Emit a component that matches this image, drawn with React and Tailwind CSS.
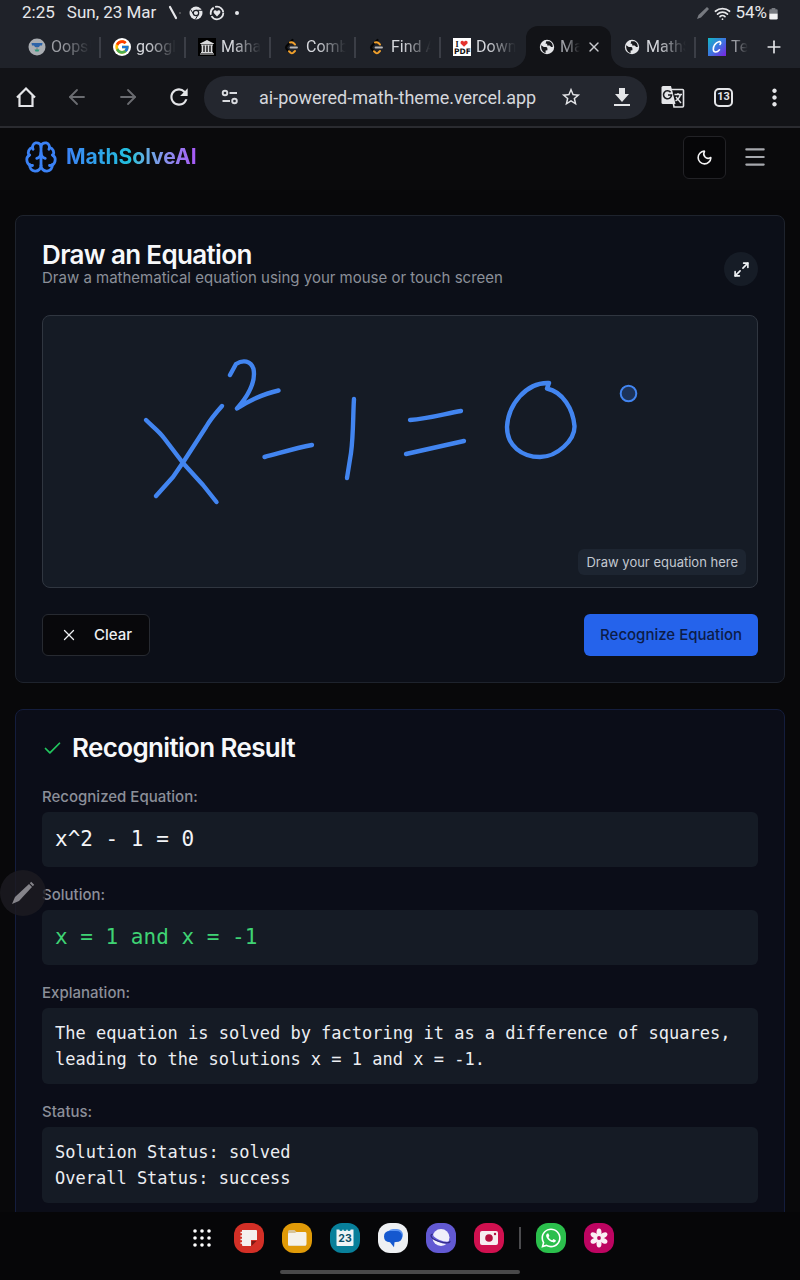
import React from "react";
import { Brain, Moon, Menu, Maximize2, X, Check, Plus, Wifi, ArrowLeft, ArrowRight } from "lucide-react";
import { FcGoogle } from "react-icons/fc";
import { MdRefresh, MdStarBorder, MdMoreVert } from "react-icons/md";
import { FaWhatsapp } from "react-icons/fa";

const fade = "[mask-image:linear-gradient(to_right,black_30%,transparent)]";

function GlobeIcon() {
  return (
    <svg viewBox="0 0 18 18" className="size-[18px] shrink-0" aria-hidden="true">
      <circle cx="9" cy="9" r="7.2" fill="#e4e5e8" />
      <path d="M3.200 7.200 5.800 9h2.400q1.200.2 1.200 1.600v1.600l-1.800.2v2.600C5 14.400 2.800 11.500 3.200 7.200z" fill="#17181c" />
      <path d="M8.200 3.200h3.200c2.400 1 3.400 3 3.400 5.800h-1.600l-1.600-1.600H9.200V5.800H7.600z" fill="#17181c" />
    </svg>
  );
}

function LampIcon() {
  return (
    <svg viewBox="0 0 18 18" className="size-[18px] shrink-0" aria-hidden="true">
      <circle cx="9" cy="9" r="8.500" fill="#a9adb2" />
      <path d="M3.500 5h11l-.5 2.500H12q-.5 2-3 2t-3-2H4z" fill="#2c63a8" />
      <path d="M8 9h2v3H8z" fill="#8b9297" />
      <path d="M6.500 11.500h5l-1 2h-3z" fill="#2f9a7c" />
    </svg>
  );
}

function MuseumIcon() {
  return (
    <svg viewBox="0 0 18 18" className="size-[18px] shrink-0" aria-hidden="true">
      <path fill="#000" d="M0 0h18v18H0z" />
      <path d="M2 5.500 9 2l7 3.500V6H2zM3 14h12v1H3zM2 15.500h14v1H2zM3 6.500h12v1H3z" fill="#d9dadc" />
      <path d="M4.500 7v7M7.500 7v7M10.500 7v7M13.500 7v7" stroke="#d9dadc" strokeWidth="1.700" />
    </svg>
  );
}

function CodeIcon() {
  return (
    <svg viewBox="0 0 18 18" className="size-[18px] shrink-0" fill="none" strokeLinecap="round" aria-hidden="true">
      <path d="M9.500 2 3.500 8.300q-1 1.200 0 2.400L6 13.300" stroke="#050505" strokeWidth="2.200" />
      <path d="M7 4.500q2-.8 3.500.6l1.500 1.400" stroke="#f0a02c" strokeWidth="2" />
      <path d="m6 13.300 1.600 1.500q1.300 1 2.600 0l1.800-1.800" stroke="#f0a02c" strokeWidth="2" />
      <path d="M7.500 9.500H14" stroke="#b7b7b9" strokeWidth="1.800" />
    </svg>
  );
}

function PdfIcon() {
  return (
    <svg viewBox="0 0 18 18" className="size-[18px] shrink-0" aria-hidden="true">
      <path fill="#fff" d="M0 0h18v18H0z" />
      <text x="2.500" y="8.500" fontSize="8" fontWeight="700" fontFamily="Liberation Serif, serif" fill="#111">I</text>
      <path d="M11 8.800 7.600 5.400q-.4-2.600 1.600-2.600 1.300 0 1.800 1.200.5-1.200 1.900-1.200 2.200.2 1.600 2.600z" fill="#e5322d" />
      <text x="1" y="16" fontSize="7.500" fontWeight="700" fontFamily="DejaVu Sans, sans-serif" fill="#111">PDF</text>
    </svg>
  );
}

function ScriptIcon() {
  return (
    <svg viewBox="0 0 18 18" className="size-[18px] shrink-0" aria-hidden="true">
      <defs>
        <linearGradient id="teal-violet" x1="0" y1="0" x2="1" y2="1">
          <stop offset="0" stopColor="#12b9c4" />
          <stop offset="0.500" stopColor="#3c76df" />
          <stop offset="1" stopColor="#7b22e0" />
        </linearGradient>
      </defs>
      <path fill="url(#teal-violet)" d="M0 0h18v18H0z" />
      <path d="M12 6.500c1.500-1.500.5-3.300-1.300-2.800C7.500 4.500 5 8.500 5.300 11.500c.3 3.300 3.700 3.400 6.200.3" fill="none" stroke="#fff" strokeWidth="1.600" strokeLinecap="round" />
    </svg>
  );
}

function GoogleBadge() {
  return (
    <span className="flex size-[18px] shrink-0 items-center justify-center rounded-full bg-white">
      <FcGoogle size={16} />
    </span>
  );
}

const tabs = [
  { title: "Oops!", icon: <LampIcon />, line: true, dim: true },
  { title: "google", icon: <GoogleBadge />, line: true },
  { title: "Mahara", icon: <MuseumIcon />, line: true },
  { title: "Combi", icon: <CodeIcon />, line: true },
  { title: "Find A", icon: <CodeIcon />, line: true },
  { title: "Downl", icon: <PdfIcon />, shape: "rounded-br-2xl" },
  { title: "Math", icon: <GlobeIcon />, active: true },
  { title: "MathS", icon: <GlobeIcon />, line: true, shape: "rounded-bl-2xl" },
  { title: "Te", icon: <ScriptIcon />, last: true, dim: true },
];

function Tab({ tab }) {
  if (tab.active) {
    return (
      <div className="w-[85px] shrink-0 bg-[#1f2229]">
        <div className="flex h-full items-center rounded-t-xl bg-[#121317] pl-3">
          <button className="flex min-w-0 items-center gap-1">
            {tab.icon}
            <span className={`w-[20px] overflow-hidden text-left text-[16px] text-[#a0a2a8] ${fade}`}>{tab.title}</span>
          </button>
          <button aria-label="Close tab" className="ml-[6px] text-[#c9cbd0]">
            <X size={16} strokeWidth={2} />
          </button>
        </div>
      </div>
    );
  }
  return (
    <div className={`bg-[#121317] ${tab.last ? "min-w-0 flex-1" : "w-[85px] shrink-0"}`}>
      <button className={`flex h-full w-full items-center gap-1 bg-[#1f2229] pl-3 ${tab.shape || ""}`}>
        {tab.icon}
        <span className={`min-w-0 flex-1 overflow-hidden whitespace-nowrap pl-px text-left text-[16px] ${tab.dim ? "text-[#9b9da3]" : "text-[#d5d7dc]"} ${fade}`}>
          {tab.title}
        </span>
        {!tab.last && <span className={`ml-1 h-[21px] w-[2px] shrink-0 ${tab.line ? "bg-[#3b3e46]" : ""}`} />}
      </button>
    </div>
  );
}

function StatusBar() {
  return (
    <div className="flex h-[26px] shrink-0 items-center justify-between bg-[#1f2229] pr-[22px] pl-[22px] text-[17px] text-[#e6e7ea]">
      <div className="flex items-center gap-3">
        <time>2:25</time>
        <span>Sun, 23 Mar</span>
        <svg viewBox="0 0 72 16" className="h-4 w-[72px]" fill="none" aria-hidden="true">
          <path d="m2 2 6 11" stroke="#e6e7ea" strokeWidth="2.200" strokeLinecap="round" />
          <circle cx="12" cy="8" r=".8" fill="#888" />
          <circle cx="28" cy="8" r="6.500" fill="#e6e7ea" />
          <circle cx="28" cy="8" r="2.700" fill="#e6e7ea" stroke="#1f2229" strokeWidth="1.200" />
          <path d="M28 5.300h6M25.700 9.500l-3-5M30.300 9.500l-3 5" stroke="#1f2229" />
          <circle cx="49" cy="8" r="6.300" stroke="#e6e7ea" strokeWidth="1.800" strokeDasharray="16 1.500 8 1.500 11 1.500" />
          <path d="M49 11.500 45.800 8q-.8-2.500 1.300-2.700 1.400 0 1.900 1.200.5-1.200 1.900-1.200 2.100.2 1.300 2.700z" fill="#e6e7ea" />
          <circle cx="69" cy="8" r="2" fill="#e6e7ea" />
        </svg>
      </div>
      <div className="flex items-center gap-1">
        <svg viewBox="0 0 14 14" className="size-[14px]" aria-hidden="true">
          <path d="m1 13 1.500-4L11 1l2 2-8 8.500z" fill="#777a80" />
        </svg>
        <Wifi size={17} strokeWidth={2.400} />
        <span className="flex items-center gap-0.5">
          54%
          <svg viewBox="0 0 9 14" className="h-[13px] w-[9px]" aria-hidden="true">
            <path d="M2.500 1h4v1.500H8q1 0 1 1V7H0V3.500q0-1 1-1h1.500z" fill="#777a80" />
            <path d="M0 7h9v5q0 1.500-1.500 1.500h-6Q0 13.500 0 12z" fill="#f2f2f3" />
          </svg>
        </span>
      </div>
    </div>
  );
}

function ToolButton({ label, dim, children }) {
  return (
    <button aria-label={label} className={`flex w-[51px] shrink-0 items-center justify-center ${dim ? "text-[#6a6c71]" : "text-[#e4e5e8]"}`}>
      {children}
    </button>
  );
}

function Toolbar() {
  return (
    <div className="flex h-[60px] shrink-0 items-center border-b-2 border-[#2a2b30] bg-[#121317]">
      <ToolButton label="Home">
        <svg viewBox="0 0 22 22" className="size-[22px]" fill="none" stroke="currentColor" strokeWidth="2.200" aria-hidden="true">
          <path d="M2 11.500 11 2.500l9 9M4.500 9v11h13V9" />
        </svg>
      </ToolButton>
      <ToolButton label="Back" dim><ArrowLeft size={24} strokeWidth={1.800} /></ToolButton>
      <ToolButton label="Forward" dim><ArrowRight size={24} strokeWidth={1.800} /></ToolButton>
      <ToolButton label="Reload"><MdRefresh size={26} /></ToolButton>
      <div className="flex h-[43px] min-w-0 flex-1 items-center rounded-full bg-[#24272f]">
        <button aria-label="Site settings" className="flex w-[51px] shrink-0 items-center justify-center">
          <svg viewBox="0 0 18 16" className="h-4 w-[18px]" fill="none" stroke="#d9dbdf" strokeWidth="1.900" aria-hidden="true">
            <circle cx="4" cy="4" r="2.300" />
            <path d="M8.500 4H16M1.500 12H9" />
            <circle cx="13.500" cy="12" r="2.300" />
          </svg>
        </button>
        <input aria-label="Address" readOnly value="ai-powered-math-theme.vercel.app" className="ml-1 min-w-0 flex-1 bg-transparent text-[18px] text-[#d5d7dc] outline-none" />
        <button aria-label="Bookmark" className="flex w-[51px] shrink-0 items-center justify-center text-[#e4e5e8]"><MdStarBorder size={22} /></button>
        <button aria-label="Download" className="flex w-[51px] shrink-0 items-center justify-center">
          <svg viewBox="0 0 16 20" className="h-5 w-4" fill="#e4e5e8" aria-hidden="true">
            <path d="M5 1h6v6h4l-7 8-7-8h4zM0 17h16v2H0z" />
          </svg>
        </button>
      </div>
      <ToolButton label="Translate">
        <svg viewBox="0 0 24 24" className="size-6" aria-hidden="true">
          <path d="M10 4.500h11.500q1 0 1 1V21q0 1-1 1H13z" fill="none" stroke="#e4e5e8" strokeWidth="1.600" />
          <path d="M2 1h8l4.500 18H2q-1.500 0-1.500-1.500v-15Q.5 1 2 1z" fill="#e4e5e8" />
          <path d="M9.600 7.200A4 4 0 1 0 10.500 10H7" fill="none" stroke="#1a1b1f" strokeWidth="1.600" />
          <path d="M13.500 9.500H21M17 8v1.500M19.500 9.500q-1 4-5 6.500M15 12l5 6" fill="none" stroke="#e4e5e8" strokeWidth="1.400" />
        </svg>
      </ToolButton>
      <ToolButton label="Open tabs">
        <span className="flex size-[19px] items-center justify-center rounded-[5px] border-2 border-[#e4e5e8] text-[11px] leading-4 font-bold">13</span>
      </ToolButton>
      <ToolButton label="More options"><MdMoreVert size={27} /></ToolButton>
    </div>
  );
}

function Field({ label, children, className }) {
  return (
    <div className="mt-[18px]">
      <dt className="text-[15px] leading-5 font-medium text-[#8b8f99]">{label}</dt>
      <dd className={`mt-[5px] rounded-md bg-[#151b25] px-[13px] py-3 font-['DejaVu_Sans_Mono',monospace] ${className}`}>{children}</dd>
    </div>
  );
}

function DrawCard() {
  return (
    <section className="rounded-lg border border-[#1e232d] bg-[#0c0f18] p-[26px]">
      <div className="flex items-center justify-between">
        <div>
          <h2 className="text-[26px] leading-[26px] font-semibold tracking-tight text-[#f7f8fa]">Draw an Equation</h2>
          <p className="text-[15px] leading-5 text-[#8b8f99]">Draw a mathematical equation using your mouse or touch screen</p>
        </div>
        <button aria-label="Expand canvas" className="mt-2 flex size-[34px] items-center justify-center rounded-full bg-[#161c26] text-[#f0f2f5]">
          <Maximize2 size={17} strokeWidth={2.300} />
        </button>
      </div>
      <div className="relative mt-[27px] overflow-hidden rounded-lg border border-[#303640] bg-[#151b25]">
        <svg viewBox="43 316 714 271" className="block w-full" fill="none" stroke="#4285f0" strokeWidth="4.400" strokeLinecap="round" strokeLinejoin="round" role="img" aria-label="Handwritten equation">
          <path d="M146 420C153 427 159 431 164 438L183 463 203 485 216.500 502" />
          <path d="M222 406C213 416 210 420 206 427L184 461 173 477 156 496" />
          <path d="M230 375 236 364C243 359.500 251 360.500 253.500 369 256 382 248 396 237 408.500 245 403 262 394 278.500 390.500" />
          <path d="M264.500 457C280 453 296 448 312 445" />
          <path d="M354 399C353 412 353.500 435 351 453L347 478" />
          <path d="M410 420C428 419 444 414 461 411" />
          <path d="M406 454 464 441" />
          <path d="M549 383C526 382 508 405 507 427 507 446 522 457 540 457 557 457 575 440 574.500 426 573 409 563 392 547 388.500L549 383" />
          <circle cx="628.500" cy="393.500" r="7.800" fill="#1d3358" strokeWidth="2" />
        </svg>
        <span className="absolute right-[11px] bottom-3 rounded-md bg-[#1d2531] px-2 py-[3px] text-[13px] leading-5 text-[#c3c8d0]">Draw your equation here</span>
      </div>
      <div className="mt-[26px] flex items-center justify-between">
        <button className="flex h-[42px] items-center gap-4 rounded-md border border-[#272a31] bg-[#08080b] px-[17px] text-[15px] font-medium text-[#eef0f3]">
          <X size={18} strokeWidth={1.700} />
          Clear
        </button>
        <button className="h-[42px] rounded-md bg-[#2563eb] px-4 text-[15px] font-medium text-[#0c1c48]">Recognize Equation</button>
      </div>
    </section>
  );
}

function ResultCard() {
  return (
    <section className="mt-[26px] rounded-lg border border-[#141d3d] bg-[#0b0d18] px-[26px] pt-[25px] pb-[26px]">
      <h2 className="flex items-center gap-[9px] text-[26px] leading-[26px] font-semibold tracking-tight text-[#f7f8fa]">
        <Check size={21} strokeWidth={2} className="text-[#22c55e]" />
        Recognition Result
      </h2>
      <dl className="pt-2">
        <Field label="Recognized Equation:" className="text-[21px] leading-[31px] text-[#f2f4f7]">x^2 - 1 = 0</Field>
        <Field label="Solution:" className="text-[21px] leading-[31px] text-[#3fd374]">x = 1 and x = -1</Field>
        <Field label="Explanation:" className="text-[17px] leading-[26px] text-[#eceef2]">
          The equation is solved by factoring it as a difference of squares, leading to the solutions x = 1 and x = -1.
        </Field>
        <Field label="Status:" className="text-[17px] leading-[26px] text-[#eceef2]">
          Solution Status: solved
          <br />
          Overall Status: success
        </Field>
      </dl>
    </section>
  );
}

function DockApp({ label, color, children }) {
  return (
    <button aria-label={label} className={`flex size-[30px] items-center justify-center rounded-[12px] ${color}`}>
      <svg viewBox="0 0 30 30" className="size-[30px]" aria-hidden="true">{children}</svg>
    </button>
  );
}

function Dock() {
  return (
    <footer className="relative z-10 flex h-[68px] shrink-0 flex-col items-center justify-between bg-[#060608] pt-[11px] pb-[6px]">
      <nav aria-label="Dock" className="flex items-center gap-[18px]">
        <DockApp label="All apps" color="">
          <g fill="#fff">
            {[8, 15, 22].map((y) => [9, 16, 23].map((x) => <circle key={`${x}-${y}`} cx={x} cy={y} r="1.800" />))}
          </g>
        </DockApp>
        <DockApp label="Notes" color="bg-[#d32f26]">
          <path d="M8 7h14q1 0 1 1v9h-6v6H9q-1 0-1-1z" fill="#f4efef" />
          <path d="M17.500 23v-5h5z" fill="#7d1a15" />
          <path d="M6.500 9.500h3M6.500 13h3M6.500 16.500h3M6.500 20h3" stroke="#f4efef" strokeWidth="1.500" />
        </DockApp>
        <DockApp label="My files" color="bg-[#e09a08]">
          <path d="M6 9q0-2 1.500-2h5l2 2H23q1 0 1 1v12q0 1-1 1H7q-1 0-1-1z" fill="#d7c49a" />
          <path d="M6 11q0-1 1-1h6l1.500-1H23q1.500 0 1.500 1.500V21q0 1.500-1.500 1.500H7.500Q6 22.500 6 21z" fill="#f4f1ea" />
        </DockApp>
        <DockApp label="Calendar" color="bg-[#087f9a]">
          <path d="M6.500 6.500h17V22q0 1-1 1h-15q-1 0-1-1z" fill="#eef3f5" />
          <g fill="#087f9a"><circle cx="11" cy="6.500" r="1.600" /><circle cx="15" cy="6.500" r="1.600" /><circle cx="19" cy="6.500" r="1.600" /></g>
          <text x="15" y="19" textAnchor="middle" fontSize="10.500" fontWeight="700" fontFamily="Inter, sans-serif" fill="#0b4f68">23</text>
        </DockApp>
        <DockApp label="Messages" color="bg-[#eef0f3]">
          <rect x="9" y="6" width="16" height="12" rx="6" fill="#5b94f2" />
          <path d="M12 8h6q6 0 6 5.500T18 19l-1.500.3-.5 5-4-5q-6-.3-6-5.800T12 8z" fill="#1558cf" />
        </DockApp>
        <DockApp label="Internet" color="bg-[#6259d3]">
          <circle cx="15" cy="14.500" r="8.500" fill="#f0effa" />
          <path d="M6.500 11.500C4 15 19 22 24.500 19" fill="none" stroke="#6259d3" strokeWidth="2.200" />
          <path d="M7 11C3 11.500 5 16 13 18.500c7 2 11.500 1.500 11-.5" fill="none" stroke="#312a83" strokeWidth="1.200" />
        </DockApp>
        <DockApp label="Camera" color="bg-[#d0104f]">
          <rect x="6" y="8" width="18" height="14" rx="2" fill="#f6edf0" />
          <circle cx="15" cy="15" r="3.800" fill="#b5103f" />
          <circle cx="21" cy="11" r="1.200" fill="#b5103f" />
        </DockApp>
        <span className="-mx-[3px] h-[22px] w-[2px] bg-[#4b4b4e]" />
        <button aria-label="WhatsApp" className="flex size-[30px] items-center justify-center rounded-[12px] bg-[#2bbf4c] text-white">
          <FaWhatsapp size={22} />
        </button>
        <DockApp label="Gallery" color="bg-[#bd0461]">
          <g fill="#faeef4">
            {[0, 60, 120, 180, 240, 300].map((a) => <ellipse key={a} cx="15" cy="9.500" rx="2.500" ry="3.900" transform={`rotate(${a} 15 15)`} />)}
            <circle cx="15" cy="15" r="4" />
          </g>
          <circle cx="15" cy="15" r="1.900" fill="#bd0461" />
        </DockApp>
      </nav>
      <span className="h-[4px] w-[240px] rounded-full bg-[#48484a]" />
    </footer>
  );
}

export default function App() {
  return (
    <div className="flex h-screen flex-col overflow-hidden bg-[#08080a] font-['Roboto',sans-serif]">
      <StatusBar />
      <div className="flex h-[42px] shrink-0 bg-[#1f2229] pl-4">
        {tabs.map((tab, i) => <Tab key={i} tab={tab} />)}
        <button aria-label="New tab" className="flex w-[52px] shrink-0 items-center justify-center text-[#e4e5e8]">
          <Plus size={20} strokeWidth={2} />
        </button>
      </div>
      <Toolbar />
      <div className="relative flex min-h-0 flex-1 flex-col font-['Inter',sans-serif]">
        <header className="flex h-[62px] shrink-0 items-center justify-between bg-[#0a0a0c] pr-8 pb-1 pl-6">
          <a href="#home" className="flex items-center gap-2">
            <Brain size={34} strokeWidth={2} className="text-[#3b82f6]" />
            <span className="bg-linear-to-r from-[#3b82f6] via-[#22c1dc] to-[#a855f7] bg-clip-text text-[21px] leading-7 font-bold text-transparent">MathSolveAI</span>
          </a>
          <div className="flex items-center gap-4">
            <button aria-label="Toggle theme" className="flex size-[43px] items-center justify-center rounded-md border border-[#222226] bg-[#060608] text-[#f4f4f5]">
              <Moon size={17} strokeWidth={2.200} />
            </button>
            <button aria-label="Open menu" className="text-[#a6a8ad]">
              <Menu size={26} strokeWidth={2} />
            </button>
          </div>
        </header>
        <main className="min-h-0 flex-1 overflow-hidden px-[15px] pt-[25px]">
          <DrawCard />
          <ResultCard />
        </main>
        <button aria-label="Pen tools" className="absolute top-[742px] left-0 flex size-[46px] items-center justify-center rounded-full bg-[#1d1b22]/80">
          <svg viewBox="0 0 24 24" className="size-6" aria-hidden="true">
            <path d="m1 23 3-7L18 3l3 3L8 20z" fill="#85848a" />
            <path d="m19.500 1.500 3 3" stroke="#85848a" strokeWidth="2" />
          </svg>
        </button>
      </div>
      <Dock />
    </div>
  );
}
